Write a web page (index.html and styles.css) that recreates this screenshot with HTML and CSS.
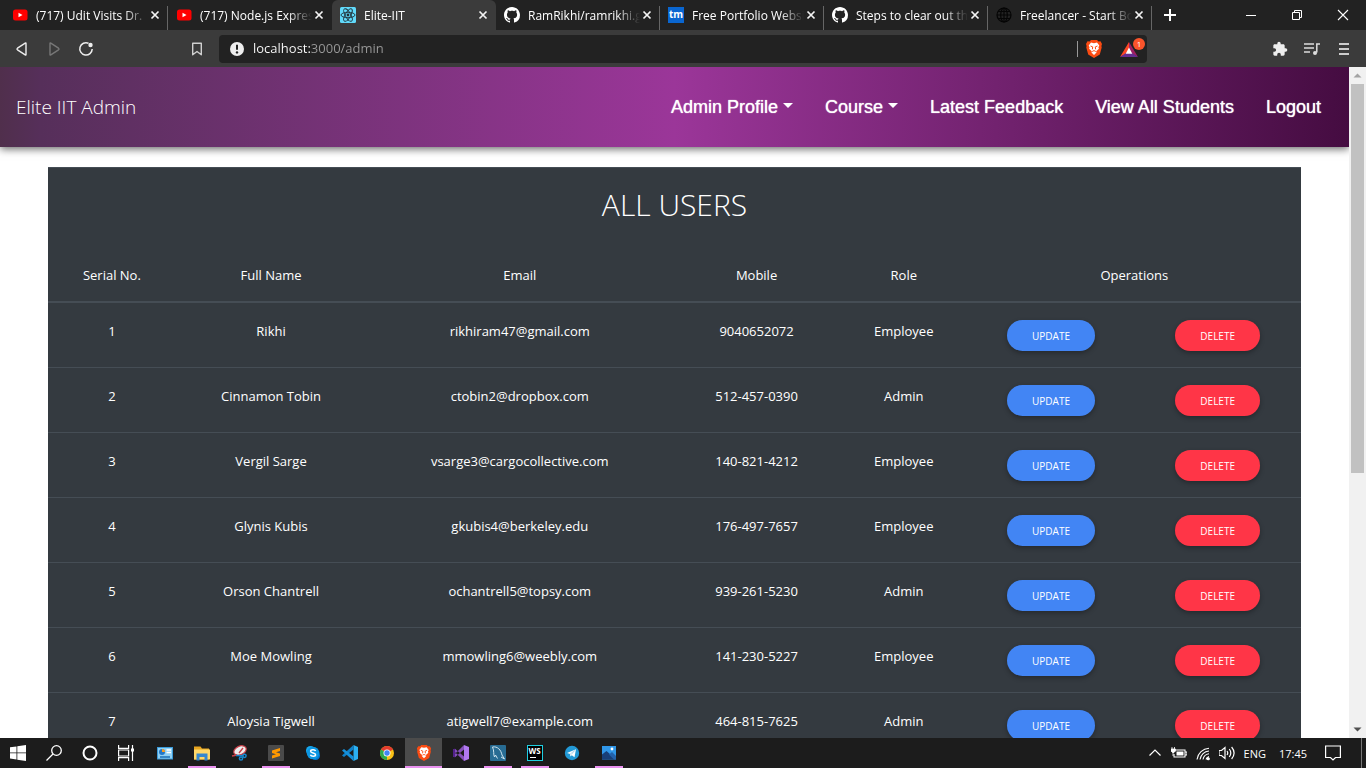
FILE: index.html
```html
<!DOCTYPE html>
<html lang="en">
<head>
<meta charset="utf-8">
<title>Elite-IIT</title>
<link rel="stylesheet" href="styles.css">
</head>
<body>
<svg class="defs" aria-hidden="true">
  <defs>
    <symbol id="youtube" viewBox="0 0 16 16"><rect x="1" y="2.500" width="14.500" height="11" rx="2.500" fill="#f00"/><path d="M6.500 5.700v4.600l4-2.300z" fill="#fff"/></symbol>
    <symbol id="github" viewBox="0 0 16 16"><path fill="#fff" d="M8 0C3.580 0 0 3.580 0 8c0 3.540 2.290 6.530 5.470 7.590.4.070.55-.17.55-.38 0-.19-.01-.82-.01-1.490-2.010.37-2.530-.49-2.690-.94-.09-.23-.48-.94-.82-1.130-.28-.15-.68-.52-.01-.53.63-.01 1.080.58 1.230.82.72 1.210 1.870.87 2.330.66.07-.52.28-.87.51-1.070-1.780-.2-3.640-.89-3.640-3.950 0-.87.31-1.590.82-2.150-.08-.2-.36-1.020.08-2.120 0 0 .67-.21 2.200.82.64-.18 1.320-.27 2-.27s1.360.09 2 .27c1.530-1.040 2.200-.82 2.200-.82.44 1.100.16 1.920.08 2.120.51.56.82 1.270.82 2.150 0 3.070-1.870 3.750-3.650 3.950.29.25.54.73.54 1.480 0 1.070-.01 1.930-.01 2.200 0 .21.15.46.55.38A8.010 8.010 0 0 0 16 8c0-4.420-3.580-8-8-8z"/></symbol>
    <symbol id="close" viewBox="0 0 10 10"><path d="M1.500 1.500l7 7M8.500 1.500l-7 7" stroke="#f4f4f4" stroke-width="1.700" fill="none"/></symbol>
    <symbol id="brave" viewBox="0 0 16 18"><path d="M5 0h6l1.500 1.500 2-.2L16 4l-.6 2 .3 1.500-1.900 7L8 18l-5.800-3.500-1.900-7L.6 6 0 4l1.500-2.700 2 .2z" fill="#fb4b12"/><path d="M8 3.200l3-.6 2.300 2.900-.9 1.800.5 1.500-2.700 2.500.3 1.200L8 15l-2.500-2.500.3-1.200-2.700-2.500.5-1.500-.9-1.800L5 2.600z" fill="#fff"/><path d="M4.500 6l2.200.9-.3 2.400M11.500 6l-2.200.9.300 2.400M6.200 11.500L8 10.600l1.800.9" fill="none" stroke="#fb4b12" stroke-width="1"/></symbol>
  </defs>
</svg>

<header class="browser">
  <div class="tabs">
    <div class="tab">
      <svg class="favicon"><use href="#youtube"/></svg>
      <span class="tab-title">(717) Udit Visits Dr.</span>
      <button class="tab-close" aria-label="Close tab"><svg><use href="#close"/></svg></button>
    </div>
    <div class="tab before-active">
      <svg class="favicon"><use href="#youtube"/></svg>
      <span class="tab-title">(717) Node.js Expres</span>
      <button class="tab-close" aria-label="Close tab"><svg><use href="#close"/></svg></button>
    </div>
    <div class="tab active">
      <svg class="favicon" viewBox="0 0 16 16"><rect width="16" height="16" rx="1.500" fill="#61dafb"/><g fill="none" stroke="#20323a" stroke-width=".9"><ellipse cx="8" cy="8" rx="7" ry="2.700"/><ellipse cx="8" cy="8" rx="7" ry="2.700" transform="rotate(60 8 8)"/><ellipse cx="8" cy="8" rx="7" ry="2.700" transform="rotate(120 8 8)"/></g><circle cx="8" cy="8" r="1.400" fill="#20323a"/></svg>
      <span class="tab-title">Elite-IIT</span>
      <button class="tab-close" aria-label="Close tab"><svg><use href="#close"/></svg></button>
    </div>
    <div class="tab">
      <svg class="favicon"><use href="#github"/></svg>
      <span class="tab-title">RamRikhi/ramrikhi.g</span>
      <button class="tab-close" aria-label="Close tab"><svg><use href="#close"/></svg></button>
    </div>
    <div class="tab">
      <span class="favicon tm">tm</span>
      <span class="tab-title">Free Portfolio Websi</span>
      <button class="tab-close" aria-label="Close tab"><svg><use href="#close"/></svg></button>
    </div>
    <div class="tab">
      <svg class="favicon"><use href="#github"/></svg>
      <span class="tab-title">Steps to clear out th</span>
      <button class="tab-close" aria-label="Close tab"><svg><use href="#close"/></svg></button>
    </div>
    <div class="tab">
      <svg class="favicon" viewBox="0 0 16 16" fill="none" stroke="#050505" stroke-width="1.200"><circle cx="8" cy="8" r="7"/><ellipse cx="8" cy="8" rx="3.300" ry="7"/><path d="M1 8h14M2 4.500h12M2 11.500h12M8 1v14"/></svg>
      <span class="tab-title">Freelancer - Start Bo</span>
      <button class="tab-close" aria-label="Close tab"><svg><use href="#close"/></svg></button>
    </div>
    <button class="new-tab" aria-label="New tab"><svg viewBox="0 0 12 12"><path d="M6 0v12M0 6h12" stroke="#fff" stroke-width="2"/></svg></button>
    <div class="window-buttons">
      <button aria-label="Minimize"><svg viewBox="0 0 12 12"><path d="M1 6.500h10" stroke="#fff"/></svg></button>
      <button aria-label="Restore"><svg viewBox="0 0 12 12" fill="none" stroke="#fff"><path d="M1.500 3.500h7v7h-7zM3.500 3.500v-2h7v7h-2"/></svg></button>
      <button aria-label="Close window"><svg viewBox="0 0 12 12"><path d="M1 1l10 10M11 1L1 11" stroke="#fff" stroke-width="1.100"/></svg></button>
    </div>
  </div>

  <div class="toolbar">
    <div class="nav-buttons">
      <button aria-label="Back"><svg viewBox="0 0 16 16" fill="none" stroke="#eee" stroke-width="1.400" stroke-linejoin="round"><path d="M12 2.500v11q0 .8-.8.400L3.500 8.800q-1-.8 0-1.600l7.700-5.100q.8-.4.800.4z"/></svg></button>
      <button aria-label="Forward"><svg viewBox="0 0 16 16" fill="none" stroke="#777" stroke-width="1.400" stroke-linejoin="round"><path d="M4 2.500v11q0 .8.800.400l7.700-5.100q1-.8 0-1.600L4.800 2.100Q4 1.700 4 2.500z"/></svg></button>
      <button aria-label="Reload"><svg viewBox="0 0 16 16"><path d="M10.500 2.200A6.200 6.200 0 1 0 14.200 8" fill="none" stroke="#eee" stroke-width="1.500"/><circle cx="12.500" cy="4" r="2.200" fill="#eee"/></svg></button>
    </div>
    <button class="bookmark" aria-label="Bookmark"><svg viewBox="0 0 16 16"><path d="M3.700 2.200h8.600v11.600L8 10.500l-4.300 3.300z" fill="none" stroke="#d0d0d0" stroke-width="1.400" stroke-linejoin="round"/></svg></button>
    <div class="address">
      <svg class="site-info" viewBox="0 0 14 14"><circle cx="7" cy="7" r="7" fill="#eee"/><path d="M7 2.800v5" stroke="#222" stroke-width="2"/><circle cx="7" cy="10.400" r="1.200" fill="#222"/></svg>
      <input class="url" type="text" aria-label="Address" value="localhost:3000/admin">
      <span class="divider"></span>
      <button aria-label="Brave Shields"><svg class="shield"><use href="#brave"/></svg></button>
      <button class="rewards" aria-label="Brave Rewards"><svg viewBox="0 0 18 16"><path d="M9 1L0 16l9-5z" fill="#ff4724"/><path d="M9 1l9 15-9-5z" fill="#9e1f63"/><path d="M0 16h18l-9-6z" fill="#662d91"/><path d="M9 6.500l-3.300 6.300h6.600z" fill="#fff"/></svg><span class="badge">1</span></button>
    </div>
    <div class="tools">
      <button aria-label="Extensions"><svg viewBox="0 0 24 24" fill="#eee"><path d="M20.500 11H19V7c0-1.100-.9-2-2-2h-4V3.500a2.500 2.500 0 0 0-5 0V5H4c-1.100 0-2 .9-2 2v3.800h1.500a2.700 2.700 0 0 1 0 5.400H2V20c0 1.100.9 2 2 2h3.800v-1.500a2.700 2.700 0 0 1 5.400 0V22H17c1.100 0 2-.9 2-2v-4h1.500a2.500 2.500 0 0 0 0-5z"/></svg></button>
      <button aria-label="Media"><svg viewBox="0 0 16 16" fill="none" stroke="#ddd" stroke-width="1.500"><path d="M0 3h10M0 7h10M0 11h6M16 3h-3.200v8.500"/><circle cx="11" cy="12" r="2" fill="#ddd" stroke="none"/></svg></button>
      <button aria-label="Menu"><svg viewBox="0 0 16 16"><path d="M3 3h10M3 8h10M3 13h10" stroke="#ccc" stroke-width="1.800"/></svg></button>
    </div>
  </div>
</header>

<div class="viewport">
  <div class="page">
    <nav class="navbar">
      <a class="brand" href="#">Elite IIT Admin</a>
      <div class="links">
        <a class="caret" href="#">Admin Profile</a>
        <a class="caret" href="#">Course</a>
        <a href="#">Latest Feedback</a>
        <a href="#">View All Students</a>
        <a href="#">Logout</a>
      </div>
    </nav>
    <main class="card">
      <h1>ALL USERS</h1>
      <table>
        <colgroup><col class="c-serial"><col class="c-name"><col class="c-email"><col class="c-mobile"><col class="c-role"><col class="c-op"><col class="c-op"></colgroup>
        <thead>
          <tr><th>Serial No.</th><th>Full Name</th><th>Email</th><th>Mobile</th><th>Role</th><th colspan="2">Operations</th></tr>
        </thead>
        <tbody>
          <tr><td>1</td><td>Rikhi</td><td>rikhiram47@gmail.com</td><td>9040652072</td><td>Employee</td><td><button class="btn update">UPDATE</button></td><td><button class="btn delete">DELETE</button></td></tr>
          <tr><td>2</td><td>Cinnamon Tobin</td><td>ctobin2@dropbox.com</td><td>512-457-0390</td><td>Admin</td><td><button class="btn update">UPDATE</button></td><td><button class="btn delete">DELETE</button></td></tr>
          <tr><td>3</td><td>Vergil Sarge</td><td>vsarge3@cargocollective.com</td><td>140-821-4212</td><td>Employee</td><td><button class="btn update">UPDATE</button></td><td><button class="btn delete">DELETE</button></td></tr>
          <tr><td>4</td><td>Glynis Kubis</td><td>gkubis4@berkeley.edu</td><td>176-497-7657</td><td>Employee</td><td><button class="btn update">UPDATE</button></td><td><button class="btn delete">DELETE</button></td></tr>
          <tr><td>5</td><td>Orson Chantrell</td><td>ochantrell5@topsy.com</td><td>939-261-5230</td><td>Admin</td><td><button class="btn update">UPDATE</button></td><td><button class="btn delete">DELETE</button></td></tr>
          <tr><td>6</td><td>Moe Mowling</td><td>mmowling6@weebly.com</td><td>141-230-5227</td><td>Employee</td><td><button class="btn update">UPDATE</button></td><td><button class="btn delete">DELETE</button></td></tr>
          <tr><td>7</td><td>Aloysia Tigwell</td><td>atigwell7@example.com</td><td>464-815-7625</td><td>Admin</td><td><button class="btn update">UPDATE</button></td><td><button class="btn delete">DELETE</button></td></tr>
        </tbody>
      </table>
    </main>
  </div>
  <div class="scrollbar">
    <svg class="arrow" viewBox="0 0 17 17"><path d="M4.500 10.500h8L8.500 6.500z" fill="#a3a3a3"/></svg>
    <div class="track"><div class="thumb"></div></div>
    <svg class="arrow" viewBox="0 0 17 17"><path d="M4.500 6.500h8l-4 4z" fill="#505050"/></svg>
  </div>
</div>

<footer class="taskbar">
  <button class="sys" aria-label="Start"><svg viewBox="0 0 16 16" fill="#fff"><path d="M0 2.300l6.500-.9v6.100H0zM7.300 1.300L16 0v7.500H7.300zM0 8.300h6.500v6.200L0 13.600zM7.300 8.300H16V16l-8.700-1.200z"/></svg></button>
  <button class="sys" aria-label="Search"><svg viewBox="0 0 16 16" fill="none" stroke="#fff" stroke-width="1.300"><circle cx="10.500" cy="5.500" r="4.800"/><path d="M7 9l-6.500 6.500"/></svg></button>
  <button class="sys" aria-label="Cortana"><svg viewBox="0 0 16 16"><circle cx="8" cy="8" r="6.500" fill="none" stroke="#fff" stroke-width="2"/></svg></button>
  <button class="sys" aria-label="Task View"><svg viewBox="0 0 16 16" fill="none" stroke="#fff" stroke-width="1.200"><path d="M.6 0v3.400h10V0M.6 16v-3.400h10V16M.6 5h10v6H.6zM14.500 0v16"/><path d="M13 3.500h3v3h-3z" fill="#fff" stroke="none"/></svg></button>
  <div class="apps">
    <button aria-label="Control Panel"><svg viewBox="0 0 16 16"><rect x=".5" y="2.500" width="15" height="11.500" fill="#8fd0f5" stroke="#3a9ad9"/><circle cx="5" cy="7" r="3" fill="#2277c8"/><path d="M5 7V4a3 3 0 0 1 3 3z" fill="#fb9c1d"/><path d="M9.500 5h4.500M9.500 7.500h4.500" stroke="#fff" stroke-width="1.500"/><path d="M3 12h10" stroke="#1b6fb5" stroke-width="1.500"/></svg></button>
    <button class="running" aria-label="File Explorer"><svg viewBox="0 0 16 16"><path d="M0 1.500h6.500l1.500 2h7v11H0z" fill="#e8a520"/><path d="M0 4.500h16v10H0z" fill="#ffd869"/><path d="M2.500 15.500V8.500h11v7h-3v-3.500h-5v3.500z" fill="#3588cf"/></svg></button>
    <button aria-label="Snipping Tool"><svg viewBox="0 0 16 16"><ellipse cx="9" cy="5.500" rx="6.500" ry="4.300" transform="rotate(-25 9 5.500)" fill="#eee" stroke="#c8414a" stroke-width="1.200"/><path d="M8 8l4-5M6 10l-5 1" stroke="#c8414a" stroke-width="1.400"/><g fill="none" stroke="#1688cf" stroke-width="1.500"><circle cx="10" cy="13.500" r="1.600"/><circle cx="13.500" cy="10.800" r="1.600"/><path d="M5 10.500l7 .3"/></g></svg></button>
    <button class="running" aria-label="Sublime Text"><svg viewBox="0 0 16 16"><rect width="16" height="16" rx="1" fill="#4a4a4a"/><path d="M4 5.500L12 3v3L8 7.300 12 8.500V11l-8 2.500v-3l4-1.300L4 8z" fill="#ff9800"/></svg></button>
    <button aria-label="Skype"><svg viewBox="0 0 16 16"><circle cx="5.500" cy="5.500" r="4.500" fill="#17a9ef"/><circle cx="10.500" cy="10.500" r="4.500" fill="#0078d4"/><circle cx="8" cy="8" r="6.300" fill="#0c96e2"/><path d="M10.600 6C10 4.300 5.600 4.300 5.600 6.300c0 2.200 5 1.200 5 3.400 0 2-4.600 2-5.200 0" fill="none" stroke="#fff" stroke-width="1.500"/></svg></button>
    <button aria-label="Visual Studio Code"><svg viewBox="0 0 16 16"><path d="M11.500 0L16 2v12l-4.500 2z" fill="#2bb1f3"/><path d="M11.500 0v4.500L2 12 0 10.600z" fill="#0f80c8"/><path d="M11.500 16v-4.500L2 4 0 5.400z" fill="#1590db"/></svg></button>
    <button aria-label="Chrome"><svg viewBox="0 0 16 16"><circle cx="8" cy="8" r="7" fill="#fbc116"/><path d="M8 8L1.940 4.500A7 7 0 0 1 14.060 4.500z" fill="#e33b2e"/><path d="M8 8L1.940 4.500A7 7 0 0 0 8 15z" fill="#2da94f"/><circle cx="8" cy="8" r="3.500" fill="#fff"/><circle cx="8" cy="8" r="2.700" fill="#4285f4"/></svg></button>
    <button class="running current" aria-label="Brave"><svg viewBox="0 0 16 18"><use href="#brave" width="16" height="18"/></svg></button>
    <button aria-label="Visual Studio"><svg viewBox="0 0 16 16"><path d="M11 0l5 2v12l-5 2z" fill="#b179f1"/><path d="M11 4.500V0L1.300 9.500 0 11.500l2 .8zM11 11.500V16L1.300 6.500 0 4.500l2-.8z" fill="#8450ba"/><path d="M0 4.500l2-.8v8.600l-2-.8z" fill="#52218a"/></svg></button>
    <button class="running" aria-label="MySQL Workbench"><svg viewBox="0 0 16 16"><rect width="16" height="16" rx="1" fill="#286c93"/><path d="M2.500 2c5-1 8.500 3 9.500 8l2.500 4-3.500-2M2.500 2c2 4 .5 7 2 10l1-2 2 3.500" fill="none" stroke="#cfe4ee"/></svg></button>
    <button class="running" aria-label="WebStorm"><span class="ws">WS</span></button>
    <button aria-label="Telegram"><svg viewBox="0 0 16 16"><circle cx="8" cy="8" r="7.200" fill="#2299d6"/><path d="M3 8l9-3.700-1.500 8-2.700-2-1.400 1.300-.3-2.600z" fill="#fff"/><path d="M6.200 9l4.500-3.500-3.300 4" stroke="#9bcce8" fill="none" stroke-width=".7"/></svg></button>
    <button class="running" aria-label="Photos"><svg viewBox="0 0 16 16"><path d="M1 1h14v13.500H1z" fill="#3097e8"/><path d="M1 9.500L5.500 6l9.500 8.500H1z" fill="#183f78"/><path d="M8 9.500l3-2.500 4 4v3.500h-2z" fill="#2362ab"/><circle cx="11" cy="4" r="1.400" fill="#fff"/></svg></button>
  </div>
  <div class="tray">
    <button aria-label="Hidden icons"><svg viewBox="0 0 16 16"><path d="M2.500 10.500L8 5l5.500 5.500" fill="none" stroke="#fff" stroke-width="1.200"/></svg></button>
    <button aria-label="Battery"><svg viewBox="0 0 16 16"><path d="M5 5h9v7H3V9M14.500 7h1.500v3h-1.500" fill="none" stroke="#fff" stroke-width="1.100"/><path d="M5.500 6.500h7v4h-7z" fill="#fff"/><path d="M0 4h4.500v2L3 7.500H1.500L0 6zM1 2v2M3.500 2v2M2 7v4" fill="#fff" stroke="#fff" stroke-width=".8"/></svg></button>
    <button aria-label="Wi-Fi"><svg viewBox="0 0 16 16" fill="none" stroke="#fff" stroke-width="1.100"><path d="M2 14.500A13 13 0 0 1 14 3.200M5 14.500a10 10 0 0 1 9-8.500M8 14.500a7 7 0 0 1 6-5.700M11 14.500a4 4 0 0 1 3-2.900"/><circle cx="13.300" cy="13.800" r="1" fill="#fff"/></svg></button>
    <button aria-label="Volume"><svg viewBox="0 0 16 16" fill="none" stroke="#fff" stroke-width="1.200"><path d="M0 5.500h2.500L6 2.500v11l-3.500-3H0zM8 6q1.500 2 0 4M10.300 4q3 4 0 8M12.600 2q5 6 0 12"/></svg></button>
    <span class="lang">ENG</span>
    <span class="clock">17:45</span>
    <button class="notify" aria-label="Notifications"><svg viewBox="0 0 16 16"><path d="M.600 1h14.800v11.500h-4.900L8 15l-2.500-2.500H.600z" fill="none" stroke="#fff" stroke-width="1.200"/></svg></button>
  </div>
</footer>
</body>
</html>
```

FILE: styles.css
```css
* { box-sizing: border-box; }

body {
  margin: 0;
  height: 100vh;
  display: flex;
  flex-direction: column;
  overflow: hidden;
  font-family: "Open Sans", "Noto Sans", sans-serif;
  color: #fff;
  background: #fff;
}

button {
  display: flex;
  align-items: center;
  justify-content: center;
  padding: 0;
  border: 0;
  background: none;
  color: inherit;
  font: inherit;
}

a { color: inherit; text-decoration: none; }
.defs { position: absolute; width: 0; height: 0; }

/* Browser tabs */
.browser { background: #3b3b3b; }
.tabs {
  display: flex;
  height: 30px;
  padding-left: 4px;
  background: #222;
}
.tab {
  display: flex;
  align-items: center;
  flex: 0 1 164px;
  min-width: 0;
  padding: 0 5px 0 8px;
  border-right: 1px solid;
  border-image: linear-gradient(transparent 7px, #666 7px) 1;
  font-size: 12px;
}
.tab.before-active { border-image: none; border-color: transparent; }
.tab.active {
  padding-right: 6px;
  background: #3b3b3b;
  border: 0;
  border-radius: 6px 6px 0 0;
}
.favicon { width: 16px; height: 16px; flex: none; }
.tm {
  background: #0a66d0;
  font-size: 10px;
  font-weight: 700;
  line-height: 14px;
  text-align: center;
}
.tab-title {
  flex: 1;
  min-width: 0;
  padding-left: 8px;
  overflow: hidden;
  white-space: nowrap;
  mask-image: linear-gradient(90deg, #000 calc(100% - 24px), transparent);
}
.tab-close { width: 14px; }
.tab-close svg { width: 10px; height: 10px; }
.new-tab { width: 36px; }
.new-tab svg { width: 12px; height: 12px; }
.window-buttons { display: flex; margin-left: auto; }
.window-buttons button { width: 46px; }
.window-buttons svg { width: 12px; height: 12px; }

/* Toolbar */
.toolbar {
  display: flex;
  align-items: center;
  height: 37px;
  padding: 0 6px;
}
.toolbar svg { width: 16px; height: 16px; }
.toolbar button { width: 32px; height: 28px; }
.nav-buttons, .tools { display: flex; }
.toolbar .bookmark { margin-left: 79px; margin-right: 6px; }
.address {
  display: flex;
  align-items: center;
  flex: 1;
  height: 28px;
  padding: 0 2px 0 11px;
  border-radius: 4px;
  background: #222;
}
.address .site-info { width: 14px; height: 14px; }
.url {
  flex: 1;
  min-width: 0;
  padding: 0 0 2px 9px;
  border: 0;
  outline: 0;
  font: 13px/20px "Open Sans", "Noto Sans", sans-serif;
  color: transparent;
  background: linear-gradient(90deg, #fff 66px, #999 66px) text;
}
.divider { width: 1px; height: 16px; background: #999; }
.address .shield { height: 18px; }
.address .rewards { position: relative; margin-left: 3px; }
.address .rewards svg { width: 18px; }
.badge {
  position: absolute;
  top: 3px;
  right: 0;
  width: 12px;
  height: 12px;
  border-radius: 50%;
  background: #fb542b;
  font-size: 8px;
  line-height: 12px;
}
.tools { margin-left: 117px; }

/* Page */
.viewport { display: flex; flex: 1; min-height: 0; }
.page { flex: 1; overflow: hidden; }
.navbar {
  display: flex;
  align-items: center;
  justify-content: space-between;
  height: 80px;
  padding: 0 28px 0 16px;
  background: linear-gradient(90deg, #502f4c, #562f5a 3%, #9b3699 50%, #450c41);
  box-shadow: 0 2px 8px rgba(0, 0, 0, 0.6);
}
.brand { font-size: 19px; font-weight: 300; }
.links {
  display: flex;
  gap: 32px;
  font: 18px/24px "Liberation Sans", Arial, sans-serif;
  text-shadow: 0 0 1px #fff;
}
.caret::after {
  content: "";
  display: inline-block;
  margin-left: 5px;
  vertical-align: 5px;
  border: 5px solid transparent;
  border-top-color: #fff;
  border-bottom: 0;
}
.card {
  margin: 20px 48px;
  border-top: 1px solid #454d55;
  background: #343a40;
}
h1 {
  margin: 0;
  padding: 15px 0 24px;
  font-size: 30px;
  font-weight: 300;
  line-height: 44px;
  text-align: center;
}
table {
  width: 100%;
  table-layout: fixed;
  border-collapse: separate;
  border-spacing: 0;
  font-size: 13px;
  line-height: 22px;
  text-align: center;
}
.c-serial, .c-role { width: 10.2%; }
.c-name { width: 15.2%; }
.c-email { width: 24.5%; }
.c-mobile { width: 13.3%; }
.c-op { width: 13.3%; }
th {
  padding: 13px 0 15px;
  border-bottom: 2px solid #454d55;
  font-weight: 500;
}
td {
  height: 65px;
  padding: 17px 0 16px;
  border-bottom: 1px solid #454d55;
  vertical-align: top;
}
.btn {
  height: 31px;
  margin: 0 auto;
  padding: 0 25px;
  border-radius: 16px;
  box-shadow: 0 2px 5px rgba(0, 0, 0, 0.3);
  font-size: 10px;
}
.update { background: #4285f4; }
.delete { background: #ff3547; }

/* Scrollbar */
.scrollbar {
  display: flex;
  flex-direction: column;
  width: 17px;
  background: #f1f1f1;
}
.arrow { width: 17px; height: 17px; }
.track { flex: 1; padding: 0 2px; }
.thumb { height: 61%; background: #c1c1c1; }

/* Taskbar */
.taskbar {
  display: flex;
  height: 30px;
  background: #1c1c1c;
}
.taskbar svg { width: 16px; height: 16px; }
.sys { width: 36px; }
.apps { display: flex; margin-left: 2px; }
.apps button { width: 37px; }
.running {
  background: linear-gradient(#ea92f0, #ea92f0) center bottom / 28px 2px no-repeat;
}
.current {
  background: linear-gradient(#ea92f0, #ea92f0) center bottom / 100% 2px no-repeat, #4b4b4b;
}
.ws {
  width: 16px;
  height: 16px;
  border: 1px solid #1fcfe0;
  background: linear-gradient(#fff, #fff) 2px 11px / 6px 1px no-repeat, #000;
  font-size: 8px;
  font-weight: 700;
  line-height: 10px;
}
.tray {
  display: flex;
  align-items: center;
  margin-left: auto;
  margin-right: 4px;
  border-right: 1px solid #777;
  font-size: 11px;
}
.tray button { width: 24px; }
.lang { margin-left: 5px; }
.clock { margin-left: 13px; }
.tray .notify { margin: 0 16px 0 14px; }
```
